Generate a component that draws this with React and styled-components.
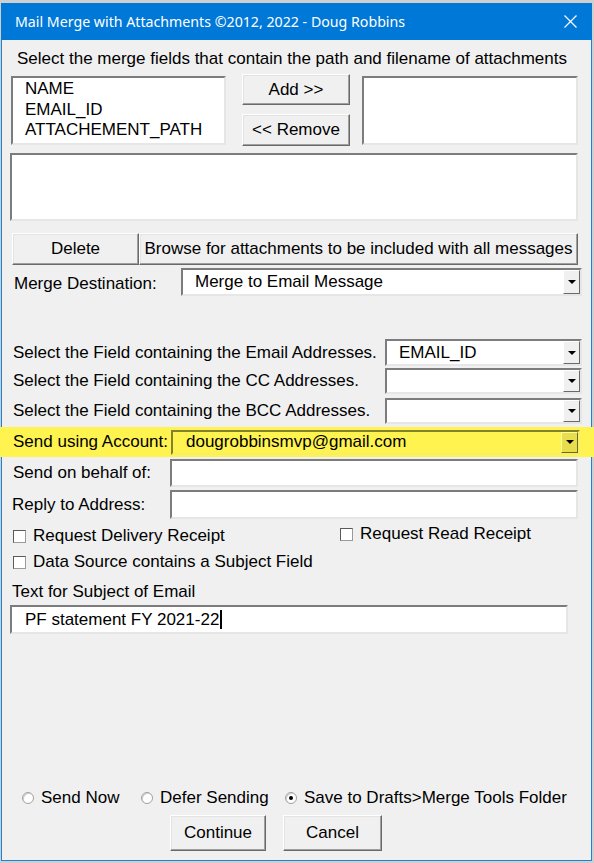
import styled, { createGlobalStyle } from "styled-components";

const GlobalStyle = createGlobalStyle`
  html, body {
    margin: 0;
    padding: 0;
    background: #cfcfcf;
  }
  body {
    font-family: "Liberation Sans", Arial, sans-serif;
    font-size: 17px;
    color: #000;
  }
`;

const Window = styled.div`
  box-sizing: border-box;
  margin: 3px 0 0 1px;
  width: 591px;
  height: 858px;
  border: 1px solid #1a82d8;
  border-top: none;
  background: #f0f0f0;
  display: flex;
  flex-direction: column;
`;

const TitleBar = styled.div`
  height: 37px;
  margin: 0 -1px;
  background: #0078d7;
  color: #fff;
  display: flex;
  align-items: center;
  justify-content: space-between;
  padding: 0 15px 0 14px;
  font-family: "Noto Sans", "Open Sans", sans-serif;
  font-size: 14.2px;
`;

const Caption = styled.div`
  height: 20px;
  line-height: 20px;
  white-space: nowrap;
  margin-top: ${(p) => p.$mt || 0}px;
  padding-left: ${(p) => p.$pl || 0}px;
`;

const Row = styled.div`
  display: flex;
  align-items: ${(p) => p.$align || "center"};
  margin-top: ${(p) => p.$mt || 0}px;
  margin-left: ${(p) => p.$ml || 0}px;
  padding-left: ${(p) => p.$pl || 0}px;
  height: ${(p) => p.$h}px;
  background: ${(p) => p.$bg || "transparent"};
  width: ${(p) => (p.$w ? p.$w + "px" : "auto")};
  gap: ${(p) => p.$gap || 0}px;
  flex-shrink: 0;
`;

const Label = styled.div`
  width: ${(p) => p.$w}px;
  flex-shrink: 0;
  white-space: nowrap;
  line-height: 20px;
  padding-top: ${(p) => p.$dy || 0}px;
`;

const Sunken = styled.div`
  box-sizing: border-box;
  width: ${(p) => p.$w}px;
  height: ${(p) => p.$h}px;
  margin-top: ${(p) => p.$mt || 0}px;
  margin-left: ${(p) => p.$ml || 0}px;
  flex-shrink: 0;
  display: flex;
  align-items: center;
  background: #fff;
  border: 2px solid;
  border-color: #7c7c7c #e6e6e6 #e6e6e6 #7c7c7c;
`;

const ListBox = styled(Sunken)`
  align-items: flex-start;
`;

const ListItems = styled.ul`
  list-style: none;
  margin: 0;
  padding: 1px 0 0 12px;
  line-height: 20.5px;
`;

const Button = styled.button`
  box-sizing: border-box;
  width: ${(p) => p.$w}px;
  height: ${(p) => p.$h}px;
  margin-top: ${(p) => p.$mt || 0}px;
  padding: 0;
  flex-shrink: 0;
  background: #f0f0f0;
  border: 1px solid;
  border-color: #fff #6a6a6a #6a6a6a #fff;
  box-shadow: inset -1px -1px 0 #a0a0a0, inset 1px 1px 0 #e3e3e3;
  font-family: inherit;
  font-size: 17px;
  color: #000;
  white-space: nowrap;
`;

const ButtonColumn = styled.div`
  display: flex;
  flex-direction: column;
  margin-left: 16px;
`;

const Combo = styled.div`
  box-sizing: border-box;
  width: ${(p) => p.$w}px;
  height: ${(p) => p.$h}px;
  flex-shrink: 0;
  display: flex;
  align-items: center;
  background: ${(p) => (p.$hl ? "#fff350" : "#fff")};
  border: 2px solid;
  border-color: ${(p) =>
    p.$hl ? "#85802e #f7ee6a #f7ee6a #85802e" : "#7c7c7c #e6e6e6 #e6e6e6 #7c7c7c"};
`;

const FieldText = styled.div`
  flex: 1;
  padding-left: ${(p) => p.$pl || 12}px;
  white-space: nowrap;
  overflow: hidden;
`;

const DropButton = styled.div`
  box-sizing: border-box;
  width: 17px;
  height: 100%;
  display: flex;
  align-items: center;
  justify-content: center;
  background: ${(p) => (p.$hl ? "#e8dd4c" : "#f0f0f0")};
  border: 1px solid;
  border-color: ${(p) =>
    p.$hl ? "#fffa9a #6f6a22 #6f6a22 #fffa9a" : "#fff #6a6a6a #6a6a6a #fff"};
  &::after {
    content: "";
    border-left: 4px solid transparent;
    border-right: 4px solid transparent;
    border-top: 4px solid #000;
  }
`;

const Option = styled.label`
  display: flex;
  align-items: center;
  height: 20px;
  width: ${(p) => (p.$w ? p.$w + "px" : "auto")};
  flex-shrink: 0;
  margin-top: ${(p) => p.$mt || 0}px;
  white-space: nowrap;
`;

const CheckBox = styled.span`
  box-sizing: border-box;
  width: 13px;
  height: 13px;
  margin-right: 7px;
  flex-shrink: 0;
  background: #fff;
  border: 1px solid;
  border-color: #5a5a5a #9a9a9a #9a9a9a #5a5a5a;
`;

const Radio = styled.span`
  box-sizing: border-box;
  width: 12px;
  height: 12px;
  margin-right: 7px;
  flex-shrink: 0;
  border-radius: 50%;
  background: #fff;
  border: 1px solid #a0a0a0;
  box-shadow: inset 1px 1px 0 #d0d0d0;
  display: flex;
  align-items: center;
  justify-content: center;
  &::after {
    content: "";
    display: ${(p) => (p.$on ? "block" : "none")};
    width: 4px;
    height: 4px;
    border-radius: 50%;
    background: #000;
  }
`;

const Caret = styled.span`
  display: inline-block;
  width: 2px;
  height: 19px;
  background: #000;
  vertical-align: -4px;
  margin-left: 1px;
`;

const Spacer = styled.div`
  flex: ${(p) => (p.$size ? `0 0 ${p.$size}px` : 1)};
`;

function CloseIcon() {
  return (
    <svg width="13" height="13" viewBox="0 0 13 13">
      <path d="M0.5 0.5 L12.5 12.5 M12.5 0.5 L0.5 12.5" stroke="#fff" strokeWidth="1.2" />
    </svg>
  );
}

function ComboBox({ w, h, value, hl, pl }) {
  return (
    <Combo $w={w} $h={h} $hl={hl}>
      <FieldText $pl={pl}>{value}</FieldText>
      <DropButton $hl={hl} />
    </Combo>
  );
}

export default function App() {
  return (
    <>
      <GlobalStyle />
      <Window>
        <TitleBar>
          <span>Mail Merge with Attachments ©2012, 2022 - Doug Robbins</span>
          <CloseIcon />
        </TitleBar>

        <Caption $mt={9} $pl={15}>
          Select the merge fields that contain the path and filename of attachments
        </Caption>

        <Row $mt={5} $h={72} $pl={9} $align="flex-start">
          <ListBox $w={215} $h={69} $mt={2}>
            <ListItems>
              <li>NAME</li>
              <li>EMAIL_ID</li>
              <li>ATTACHEMENT_PATH</li>
            </ListItems>
          </ListBox>
          <ButtonColumn>
            <Button $w={108} $h={31}>Add &gt;&gt;</Button>
            <Button $w={108} $h={32} $mt={9}>&lt;&lt; Remove</Button>
          </ButtonColumn>
          <Sunken $w={216} $h={69} $mt={2} $ml={12} />
        </Row>

        <Row $mt={7} $h={68} $pl={8}>
          <Sunken $w={568} $h={68} />
        </Row>

        <Row $mt={12} $h={32} $pl={10}>
          <Button $w={127} $h={32}>Delete</Button>
          <Button $w={439} $h={32}>Browse for attachments to be included with all messages</Button>
        </Row>

        <Row $mt={3} $h={28} $pl={12}>
          <Label $w={167} $dy={3}>Merge Destination:</Label>
          <ComboBox w={401} h={28} value="Merge to Email Message" />
        </Row>

        <Row $mt={43} $h={27} $pl={11}>
          <Label $w={372}>Select the Field containing the Email Addresses.</Label>
          <ComboBox w={197} h={27} value="EMAIL_ID" />
        </Row>
        <Row $mt={2} $h={26} $pl={11}>
          <Label $w={372}>Select the Field containing the CC Addresses.</Label>
          <ComboBox w={197} h={26} value="" />
        </Row>
        <Row $mt={4} $h={26} $pl={11}>
          <Label $w={372}>Select the Field containing the BCC Addresses.</Label>
          <ComboBox w={197} h={26} value="" />
        </Row>

        <Row $mt={3} $h={30} $ml={-2} $w={582} $pl={13} $bg="#fff350">
          <Label $w={158}>Send using Account:</Label>
          <ComboBox w={409} h={25} value="dougrobbinsmvp@gmail.com" hl pl={13} />
        </Row>

        <Row $mt={2} $h={28} $pl={11}>
          <Label $w={157}>Send on behalf of:</Label>
          <Sunken $w={408} $h={28} />
        </Row>
        <Row $mt={3} $h={29} $pl={10}>
          <Label $w={158}>Reply to Address:</Label>
          <Sunken $w={408} $h={29} />
        </Row>

        <Row $mt={6} $h={20} $pl={11} $align="flex-start">
          <Option $w={327} $mt={1}>
            <CheckBox />
            Request Delivery Receipt
          </Option>
          <Option $mt={-1}>
            <CheckBox />
            Request Read Receipt
          </Option>
        </Row>
        <Row $mt={7} $h={20} $pl={11}>
          <Option>
            <CheckBox />
            Data Source contains a Subject Field
          </Option>
        </Row>

        <Caption $mt={10} $pl={10}>Text for Subject of Email</Caption>
        <Row $mt={3} $h={29} $pl={8}>
          <Sunken $w={558} $h={29}>
            <FieldText $pl={13}>
              PF statement FY 2021-22<Caret />
            </FieldText>
          </Sunken>
        </Row>

        <Spacer />

        <Row $h={20} $pl={20}>
          <Option $w={119}>
            <Radio />
            Send Now
          </Option>
          <Option $w={144}>
            <Radio />
            Defer Sending
          </Option>
          <Option>
            <Radio $on />
            Save to Drafts&gt;Merge Tools Folder
          </Option>
        </Row>
        <Row $mt={7} $h={36} $pl={168} $gap={17}>
          <Button $w={96} $h={36}>Continue</Button>
          <Button $w={99} $h={36}>Cancel</Button>
        </Row>
        <Spacer $size={9} />
      </Window>
    </>
  );
}
